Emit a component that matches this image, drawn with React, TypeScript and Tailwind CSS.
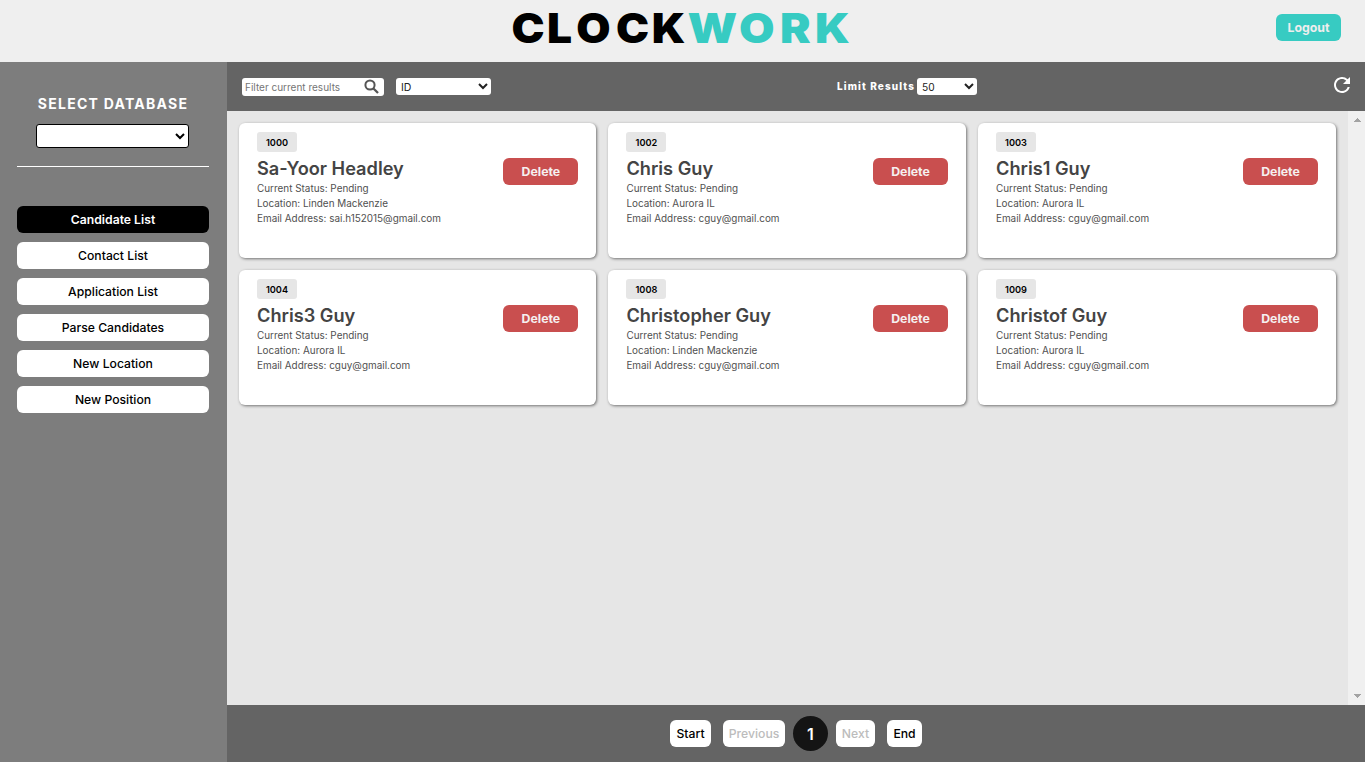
import React from "react";
import { MdRefresh } from "react-icons/md";

const candidates = [
  { id: "1000", name: "Sa-Yoor Headley", location: "Linden Mackenzie", email: "sai.h152015@gmail.com" },
  { id: "1002", name: "Chris Guy", location: "Aurora IL", email: "cguy@gmail.com" },
  { id: "1003", name: "Chris1 Guy", location: "Aurora IL", email: "cguy@gmail.com" },
  { id: "1004", name: "Chris3 Guy", location: "Aurora IL", email: "cguy@gmail.com" },
  { id: "1008", name: "Christopher Guy", location: "Linden Mackenzie", email: "cguy@gmail.com" },
  { id: "1009", name: "Christof Guy", location: "Aurora IL", email: "cguy@gmail.com" },
];

const navItems = ["Candidate List", "Contact List", "Application List", "Parse Candidates", "New Location", "New Position"];

function Logo() {
  return (
    <svg width="350" height="56" viewBox="0 0 350 56" className="font-['Inter',sans-serif] text-[41px] font-black">
      <text x="-0.5 32.3 59.6 96.4 129.3" y="43.5" transform="scale(1.08 1)" fill="#000">CLOCK</text>
      <text x="156.8 202.8 239.3 270.5" y="43.5" transform="scale(1.12 1)" fill="#37cbc2">WORK</text>
    </svg>
  );
}

function SearchIcon() {
  return (
    <svg viewBox="0 0 20 20" className="mt-px size-5 shrink-0" fill="none" stroke="#555">
      <circle cx="8" cy="8" r="4.6" strokeWidth="2" />
      <path d="M11.2 11.2L16 16" strokeWidth="2.3" />
    </svg>
  );
}

function Card({ c }: { c: (typeof candidates)[number] }) {
  return (
    <article className="flex h-[135px] justify-between rounded-md bg-white px-[18px] pt-[9px] shadow-[1px_1px_3px_rgba(0,0,0,0.5)]">
      <div className="text-[9.92px] leading-[15px] text-[#505050]">
        <span className="flex h-5 w-10 items-center justify-center rounded-[3px] bg-[#e6e6e6] pt-px text-[9.2px] font-semibold text-black">{c.id}</span>
        <h2 className="mt-[5px] mb-[1px] text-[18.2px] leading-[23px] font-semibold text-[#444]">{c.name}</h2>
        <p>Current Status: Pending</p>
        <p>Location: {c.location}</p>
        <p>Email Address: {c.email}</p>
      </div>
      <button className="mt-[26px] h-[27px] w-[75px] rounded-md bg-[#c94f4f] pt-[2px] text-[12.3px] font-bold text-[#f5f0f0]">Delete</button>
    </article>
  );
}

export default function App() {
  return (
    <div className="flex h-[762px] w-[1365px] flex-col overflow-hidden font-['Inter',sans-serif]">
      <header className="grid h-[62px] shrink-0 grid-cols-[512px_350px_1fr] items-start bg-[#efefef]">
        <span />
        <Logo />
        <button className="mt-[14px] mr-6 h-[27px] w-[65px] justify-self-end rounded-md bg-[#37cbc2] pt-[2px] text-[12.3px] font-bold text-[#eee]">Logout</button>
      </header>
      <div className="flex min-h-0 flex-1">
        <aside className="flex w-[227px] shrink-0 flex-col bg-[#7d7d7d] pr-[18px] pl-[17px] pt-[32px]">
          <h1 className="text-center text-[14px] leading-5 font-bold tracking-[1.25px] text-white">SELECT DATABASE</h1>
          <select className="mt-[10px] ml-[19px] h-6 w-[153px] rounded-[3px] border border-black bg-white pr-px text-[12px]">
            <option></option>
          </select>
          <div className="mt-[18px] mb-[39px] h-px bg-white" />
          <nav className="flex flex-col gap-[9px]">
            {navItems.map((n, i) => (
              <button key={n} className={i === 0 ? "h-[27px] rounded-md bg-black pt-[2px] text-[12.2px] font-semibold text-white" : "h-[27px] rounded-md bg-white pt-[2px] text-[12.2px] font-medium text-black"}>{n}</button>
            ))}
          </nav>
        </aside>
        <main className="flex min-w-0 flex-1 flex-col bg-[#e6e6e6]">
          <div className="flex h-[49px] shrink-0 items-center bg-[#646464] pl-[15px]">
            <div className="flex h-[18px] w-[142px] items-center justify-between rounded-[3px] bg-white pr-[2px] pl-[3px]">
              <input className="w-[112px] pt-[2px] text-[10px] placeholder:text-[#757575]" placeholder="Filter current results" />
              <SearchIcon />
            </div>
            <select className="ml-3 h-[17px] w-[95px] rounded-[3px] bg-white pt-px pl-px text-[10.5px] text-[#222]"><option>ID</option></select>
            <label className="ml-[346px] w-[80px] text-[10px] font-extrabold tracking-[1.1px] whitespace-nowrap text-white">Limit Results</label>
            <select className="h-[17px] w-[60px] rounded-[3px] bg-white pl-px text-[10.2px] text-[#222]"><option>50</option></select>
            <MdRefresh className="mr-[11px] mb-1 ml-auto size-6 text-white" />
          </div>
          <div className="flex min-h-0 flex-1">
            <section className="grid flex-1 grid-cols-[357.4px_357.6px_358px] content-start gap-3 p-3">
              {candidates.map((c) => <Card key={c.id} c={c} />)}
            </section>
            <div className="flex w-[17px] flex-col items-center justify-between bg-[#f0f0f0] pt-[7px] pb-[7px] text-[#a3a3a3]">
              <svg width="8" height="4" shapeRendering="crispEdges"><path d="M0 4L4 0L8 4Z" fill="currentColor" /></svg>
              <svg width="8" height="4" shapeRendering="crispEdges"><path d="M0 0L4 4L8 0Z" fill="currentColor" /></svg>
            </div>
          </div>
          <footer className="flex h-[57px] shrink-0 items-center bg-[#646464] pl-[443px] text-[12.2px] font-medium">
            <button className="h-[27px] w-[41px] rounded-md bg-white pt-[2px] text-black">Start</button>
            <button className="ml-3 h-[27px] w-[62px] rounded-md bg-white pt-[2px] text-[#bcbcbc]">Previous</button>
            <span className="mx-2 flex size-[35px] items-center justify-center rounded-full bg-[#141414] text-[16px] font-semibold text-white">1</span>
            <button className="h-[27px] w-[39px] rounded-md bg-white pt-[2px] text-[#bcbcbc]">Next</button>
            <button className="ml-3 h-[27px] w-[35px] rounded-md bg-white pt-[2px] text-black">End</button>
          </footer>
        </main>
      </div>
    </div>
  );
}
